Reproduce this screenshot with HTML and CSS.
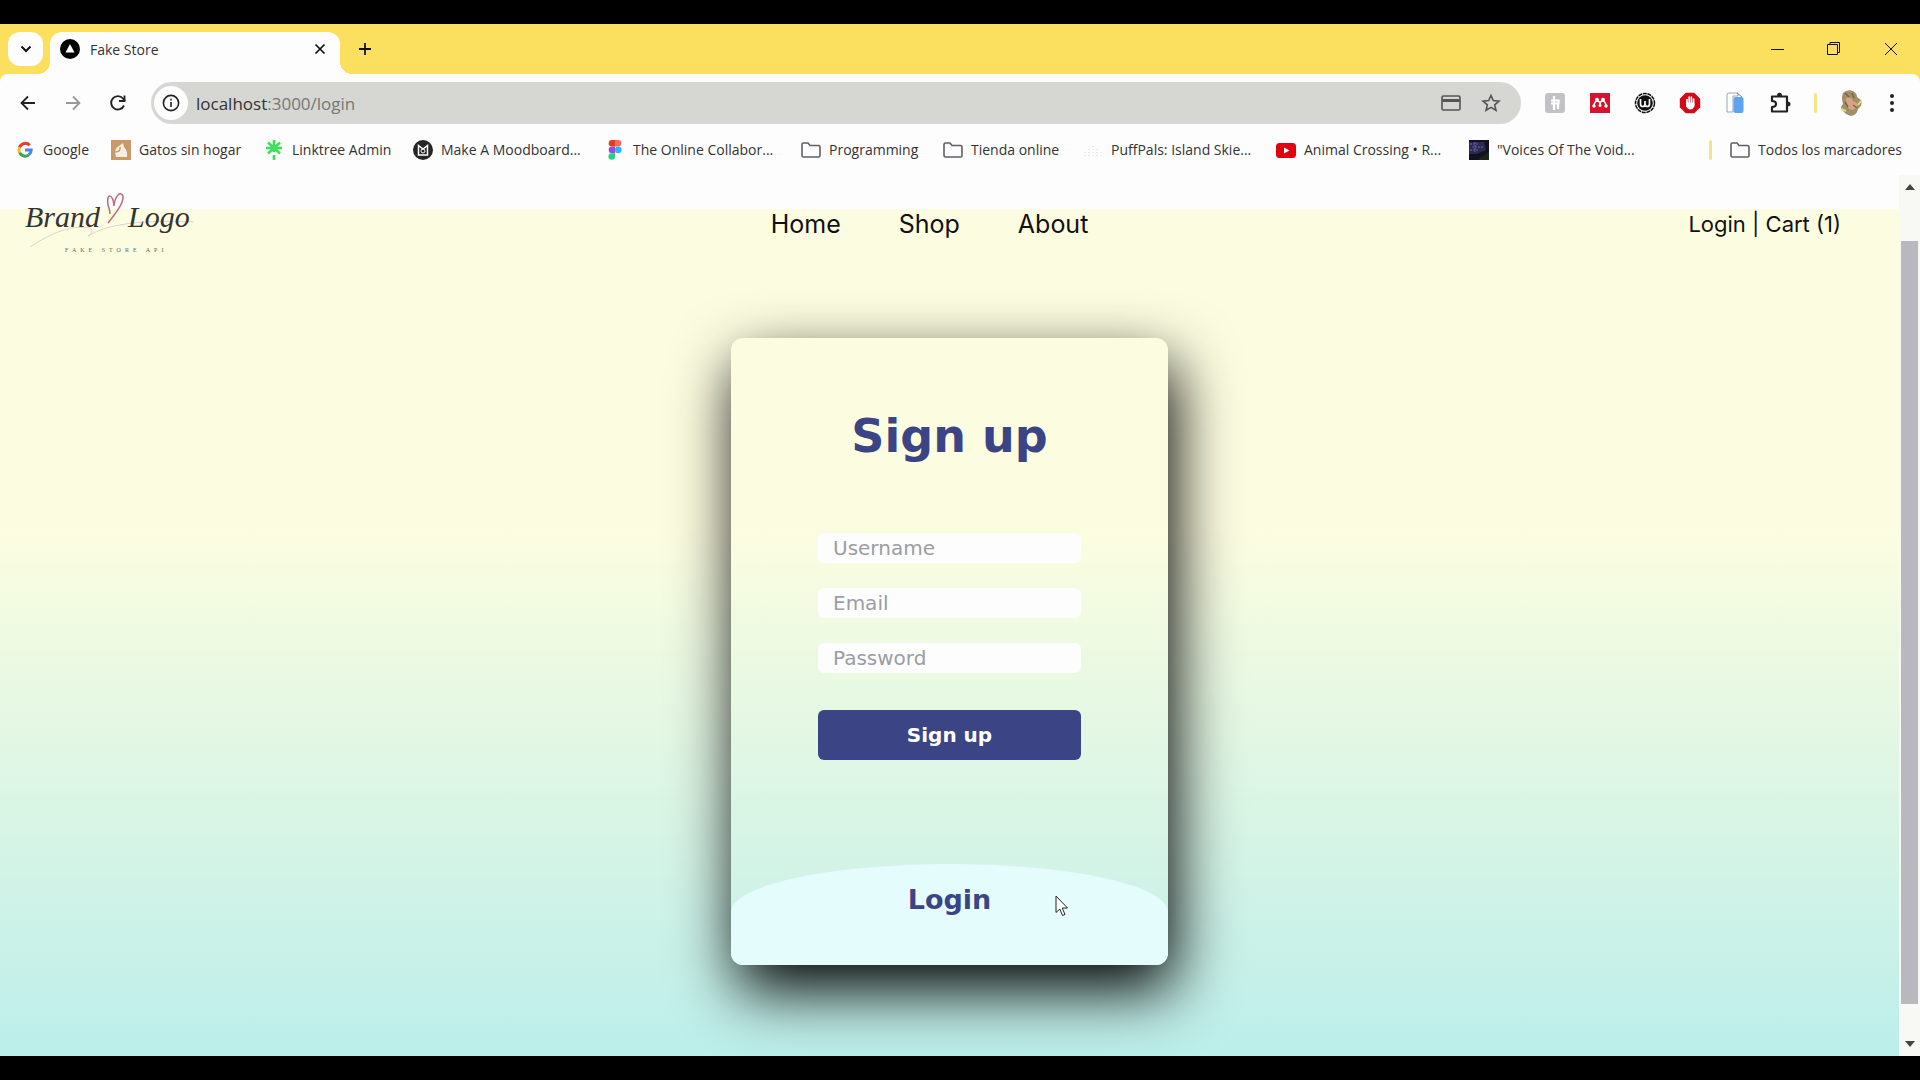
FILE: index.html
```html
<!DOCTYPE html>
<html lang="es">
<head>
<meta charset="utf-8">
<title>Fake Store</title>
<meta name="viewport" content="width=device-width, initial-scale=1">
<link rel="stylesheet" href="styles.css">
</head>
<body>
<div class="window">
  <div class="tabstrip">
    <button class="tab-search" type="button" aria-label="Buscar pestañas">
      <svg width="14" height="14" viewBox="0 0 14 14" fill="none" stroke="#111" stroke-width="2"><path d="M2.500 4.500 7 9 11.500 4.500"/></svg>
    </button>
    <div class="tab">
      <svg width="20" height="20" viewBox="0 0 20 20"><circle cx="10" cy="10" r="10" fill="#000"/><path d="M10 5 14.500 13.500H5.500Z" fill="#fff"/></svg>
      <span class="tab-title">Fake Store</span>
      <button class="plain" type="button" aria-label="Cerrar pestaña">
        <svg width="14" height="14" viewBox="0 0 14 14" stroke="#111" stroke-width="1.700"><path d="M2.500 2.500 11.500 11.500M11.500 2.500 2.500 11.500"/></svg>
      </button>
    </div>
    <button class="plain new-tab" type="button" aria-label="Nueva pestaña">
      <svg width="14" height="14" viewBox="0 0 14 14" stroke="#111" stroke-width="1.800"><path d="M7 1V13M1 7H13"/></svg>
    </button>
    <div class="window-controls">
      <button class="plain" type="button" aria-label="Minimizar"><svg width="14" height="14" viewBox="0 0 14 14" stroke="#111"><path d="M1 7.500H14"/></svg></button>
      <button class="plain" type="button" aria-label="Restaurar"><svg width="14" height="14" viewBox="0 0 14 14" fill="none" stroke="#111"><path d="M.5 2.500H10.500V12.500H.5ZM3 2.500V.5H12.500V10.500H10.500"/></svg></button>
      <button class="plain" type="button" aria-label="Cerrar"><svg width="14" height="14" viewBox="0 0 14 14" stroke="#111"><path d="M1 1 13 13M13 1 1 13"/></svg></button>
    </div>
  </div>

  <div class="toolbar">
    <div class="history">
      <button class="plain" type="button" aria-label="Atrás"><svg width="20" height="20" viewBox="0 0 20 20" fill="none" stroke="#222" stroke-width="1.800"><path d="M17 10H4M10 3.500 3.500 10 10 16.500"/></svg></button>
      <button class="plain" type="button" aria-label="Adelante"><svg width="20" height="20" viewBox="0 0 20 20" fill="none" stroke="#999" stroke-width="1.800"><path d="M3 10H16M10 3.500 16.500 10 10 16.500"/></svg></button>
      <button class="plain" type="button" aria-label="Recargar"><svg width="20" height="20" viewBox="0 0 20 20" fill="none" stroke="#222" stroke-width="1.900"><path d="M16 12.500A6.700 6.700 0 1 1 15 5.500L17 8"/><path d="M16.500 2.500V8H11"/></svg></button>
    </div>
    <div class="omnibox">
      <span class="site-info"><svg width="18" height="18" viewBox="0 0 18 18" fill="none" stroke="#222" stroke-width="1.600"><circle cx="9" cy="9" r="7.600"/><path d="M9 8V13M9 4.800V6.500"/></svg></span>
      <p class="url">localhost<span class="url-rest">:3000/login</span></p>
      <button class="plain" type="button" aria-label="Métodos de pago"><svg width="20" height="16" viewBox="0 0 20 16" fill="none" stroke="#555" stroke-width="1.600"><rect x="1" y="1" width="18" height="14" rx="1.500"/><path d="M1 5.500H19" stroke-width="3"/></svg></button>
      <button class="plain" type="button" aria-label="Añadir a marcadores"><svg width="20" height="20" viewBox="0 0 20 20" fill="none" stroke="#555" stroke-width="1.600"><path d="M10 2.500 12.300 7.600 18 8.200 13.700 11.900 15 17.300 10 14.400 5 17.300 6.300 11.900 2 8.200 7.700 7.600Z"/></svg></button>
    </div>
    <div class="extensions">
      <svg width="22" height="22" viewBox="0 0 22 22"><rect x="1" y="1" width="20" height="20" rx="3" fill="#c2c2c4"/><path d="M10 4V18M7 8.500H14.500V11.500H10M14 12V17M7 11.500H10" stroke="#fff" stroke-width="2.200" fill="none"/></svg>
      <svg width="22" height="22" viewBox="0 0 22 22"><path d="M1 1H21V21H1Z" fill="#d4142c"/><g fill="#fff"><circle cx="8" cy="7.800" r="2"/><circle cx="14" cy="7.800" r="2"/><circle cx="5" cy="14" r="1.700"/><circle cx="11" cy="13.500" r="1.500"/><circle cx="17" cy="14" r="1.700"/></g><path d="M5 13Q6 9 8.500 9Q11 9 11 13Q11 9 13.500 9Q16 9 17 13" fill="none" stroke="#fff" stroke-width="1.500"/></svg>
      <svg width="22" height="22" viewBox="0 0 22 22"><circle cx="11" cy="11" r="9.500" fill="#fff" stroke="#111" stroke-width="1.500" stroke-dasharray="4 .7"/><circle cx="11" cy="11" r="7.800" fill="#111"/><path d="M6.500 7V12Q6.500 14.500 8.700 14.500Q11 14.500 11 12V9V12Q11 14.500 13.300 14.500Q15.500 14.500 15.500 12V7" fill="none" stroke="#fff" stroke-width="1.700"/></svg>
      <svg width="22" height="22" viewBox="0 0 22 22"><path d="M6.700.8H15.300L21.200 6.700V15.300L15.300 21.200H6.700L.8 15.300V6.700Z" fill="#d00a16"/><path d="M8 14V7.500M10.200 12V5M12.400 12V5M14.600 13V7" stroke="#fff" stroke-width="1.700" stroke-linecap="round"/><path d="M7.200 10.500H15.400V14.500Q14 17.500 11.500 17.500Q8.500 17.500 7.200 14Z" fill="#fff"/></svg>
      <svg width="22" height="22" viewBox="0 0 22 22"><path d="M3 20V3Q3 1 5 1H14V4H9V20Z" fill="#fff" stroke="#9aa4b5"/><rect x="9.500" y="5" width="10" height="16" rx="2" fill="#5ea4ee"/><path d="M13 1 18 5" fill="none" stroke="#6b7c9a"/></svg>
      <svg width="22" height="22" viewBox="0 0 22 22"><path d="M3 4.500H18V19.500H3V15Q7 15 7 12Q7 9 3 9Z" fill="none" stroke="#222" stroke-width="2.200" stroke-linejoin="round"/><path d="M8 4Q8 .8 10.500 .8T13 4ZM18.500 9.500Q21.500 9.500 21.500 12T18.500 14.500Z" fill="#222"/></svg>
      <span class="rule"></span>
      <svg class="avatar" width="22" height="26" viewBox="0 0 22 26"><path d="M3 3Q7-1 13 1Q17 3 17 7L21 10Q23 15 18 19Q17 25 11 26Q6 25 3 21Q-1 18 3 14Q1 8 3 3Z" fill="#a08f68"/><path d="M6 8Q11 6 13 11L18 14Q17 19 12 20Q6 19 6 8Z" fill="#dca287"/><path d="M5 3 9 7M12 3 14 8M5 12 8 17M13 15 17 18" stroke="#6f6a48" stroke-width="1.500"/><path d="M18 15 21 11M1 19 6 21" stroke="#d8de7c" stroke-width="2"/></svg>
      <button class="plain" type="button" aria-label="Menú"><svg width="6" height="20" viewBox="0 0 6 20" fill="#222"><circle cx="3" cy="3" r="2"/><circle cx="3" cy="10" r="2"/><circle cx="3" cy="17" r="2"/></svg></button>
    </div>
  </div>

  <nav class="bookmarks" aria-label="Marcadores">
    <a href="#"><svg width="20" height="20" viewBox="0 0 20 20" fill="none" stroke-width="3"><path d="M14.800 5.300A6.200 6.200 0 0 0 4.500 7.500" stroke="#e5413a"/><path d="M4.500 7.500A6.200 6.200 0 0 0 4.600 12.800" stroke="#f6bd1d"/><path d="M4.600 12.800A6.200 6.200 0 0 0 13.800 14.900" stroke="#3aa757"/><path d="M13.800 14.900A6.200 6.200 0 0 0 16.200 10H10" stroke="#4285f4"/></svg>Google</a>
    <a href="#"><svg width="20" height="20" viewBox="0 0 20 20"><path d="M0 0H20V20H0Z" fill="#c79a68"/><path d="M5 17Q2 9 8 6L12 3 13 7Q17 11 16 17Z" fill="#f6eee4"/><path d="M4 12Q10 12 9 7" stroke="#c79a68" stroke-width="1.500" fill="none"/></svg>Gatos sin hogar</a>
    <a href="#"><svg width="20" height="20" viewBox="0 0 20 20" stroke="#3be05c" stroke-width="2.600"><path d="M10 0V12M10 15V20M2 8H18M4 2.500 16 13.500M16 2.500 4 13.500"/></svg>Linktree Admin</a>
    <a href="#"><svg width="20" height="20" viewBox="0 0 20 20"><circle cx="10" cy="10" r="10" fill="#262626"/><path d="M5.500 15V5.500L10 9 14.500 5.500V15Z" fill="none" stroke="#fff" stroke-width="1.500"/><circle cx="10" cy="11" r="2" fill="none" stroke="#fff"/></svg>Make A Moodboard...</a>
    <a href="#"><svg width="20" height="20" viewBox="0 0 20 20"><path d="M10 0V6.600H7A3.300 3.300 0 0 1 7 0Z" fill="#e2401c"/><path d="M10 0H13A3.300 3.300 0 0 1 13 6.600H10Z" fill="#f56a5c"/><path d="M10 6.600V13.200H7A3.300 3.300 0 0 1 7 6.600Z" fill="#954ce8"/><circle cx="13.300" cy="9.900" r="3.300" fill="#28b9f4"/><path d="M10 13.200V16.500A3.300 3.300 0 1 1 7 13.200Z" fill="#24d47a"/></svg>The Online Collabor...</a>
    <a href="#"><svg width="20" height="20" viewBox="0 0 20 20" fill="none" stroke="#5f5f66" stroke-width="1.600"><path d="M1 4.500Q1 3 2.500 3H7L9 5.500H17.500Q19 5.500 19 7V15.500Q19 17 17.500 17H2.500Q1 17 1 15.500Z"/></svg>Programming</a>
    <a href="#"><svg width="20" height="20" viewBox="0 0 20 20" fill="none" stroke="#5f5f66" stroke-width="1.600"><path d="M1 4.500Q1 3 2.500 3H7L9 5.500H17.500Q19 5.500 19 7V15.500Q19 17 17.500 17H2.500Q1 17 1 15.500Z"/></svg>Tienda online</a>
    <a href="#"><svg width="20" height="20" viewBox="0 0 20 20" stroke="#e4e4e8" stroke-width="1.500" stroke-dasharray="1 2"><path d="M2 16V10M6 16V7M10 16V5M14 16V8M18 16V10"/></svg>PuffPals: Island Skie...</a>
    <a href="#"><svg width="20" height="20" viewBox="0 0 20 20"><rect y="3" width="20" height="15" rx="3.500" fill="#e00010"/><path d="M8 7.500 13.500 10.500 8 13.500Z" fill="#fff"/></svg>Animal Crossing • R...</a>
    <a href="#"><svg width="20" height="20" viewBox="0 0 20 20"><path d="M0 0H20V20H0Z" fill="#11121f"/><path d="M0 2H15L17 10 8 14H0Z" fill="#2c2a55"/><path d="M1 4H9M3 7H14M1 10H9M6 2V12" stroke="#6c68a0" stroke-dasharray="2 1"/><path d="M8 20 20 12V20Z" fill="#1b2418"/></svg>"Voices Of The Void...</a>
    <span class="rule"></span>
    <a href="#"><svg width="20" height="20" viewBox="0 0 20 20" fill="none" stroke="#5f5f66" stroke-width="1.600"><path d="M1 4.500Q1 3 2.500 3H7L9 5.500H17.500Q19 5.500 19 7V15.500Q19 17 17.500 17H2.500Q1 17 1 15.500Z"/></svg>Todos los marcadores</a>
  </nav>

  <div class="viewport">
    <div class="page">
      <header class="site-header">
        <a class="brand" href="#" aria-label="Brand Logo">
          <svg width="184" height="88" viewBox="0 0 184 88">
            <g fill="none"><path d="M12 67Q48 43 72 48Q77 51 70 56Q98 38 176 42" stroke="#dcc6cb" opacity=".8"/><path d="M90 43C96 35 106 24 105 16C103 11 97 15 96 26C95 14 88 12 90 25Q92 31 92 34" stroke="#b96a80" stroke-width="1.500"/></g>
            <text class="script" x="7" y="47">Brand</text>
            <text class="script" x="110" y="47">Logo</text>
            <text class="tagline" x="47" y="72">FAKE STORE API</text>
          </svg>
        </a>
        <nav class="site-nav" aria-label="Principal">
          <a href="#">Home</a><a href="#">Shop</a><a href="#">About</a>
        </nav>
        <div class="account"><a href="#">Login</a> | <a href="#">Cart (1)</a></div>
      </header>
      <main class="content">
        <div class="card">
          <form class="signup">
            <h1>Sign up</h1>
            <input type="text" placeholder="Username" aria-label="Username">
            <input type="email" placeholder="Email" aria-label="Email">
            <input type="password" placeholder="Password" aria-label="Password">
            <button class="submit" type="button">Sign up</button>
          </form>
          <button class="login-panel" type="button">Login</button>
          <svg class="cursor" width="14" height="22" viewBox="0 0 14 22"><path d="M1 1V17.500L4.800 14 7.500 20.500 10 19.500 7.200 13H12.500Z" fill="#fff" stroke="#222"/></svg>
        </div>
      </main>
    </div>
    <div class="scrollbar" aria-hidden="true">
      <svg width="10" height="6" viewBox="0 0 10 6"><path d="M5 0 10 6H0Z" fill="#444"/></svg>
      <div class="thumb"></div>
      <svg width="10" height="6" viewBox="0 0 10 6"><path d="M0 0H10L5 6Z" fill="#444"/></svg>
    </div>
  </div>
</div>
</body>
</html>
```
FILE: styles.css
```css
* { box-sizing: border-box; }

body {
  margin: 0;
  background: #000;
  font-family: "Open Sans", "Noto Sans", sans-serif;
  color: #333;
}

a { color: inherit; text-decoration: none; }
svg { display: block; flex: none; }

.plain {
  display: block;
  padding: 0;
  border: 0;
  background: none;
}

.window {
  display: flex;
  flex-direction: column;
  min-height: 100vh;
  padding: 24px 0;
}

/* Tab strip */
.tabstrip {
  display: flex;
  align-items: center;
  height: 50px;
  padding: 0 22px 0 8px;
  background: #fbdf5e;
}

.tab-search {
  display: grid;
  place-items: center;
  width: 35px;
  height: 34px;
  padding: 0;
  border: 0;
  border-radius: 12px;
  background: #fdfdfd;
}

.tab {
  position: relative;
  display: flex;
  align-items: center;
  align-self: flex-end;
  gap: 10px;
  width: 290px;
  height: 42px;
  margin-left: 7px;
  padding: 0 13px 8px 10px;
  border-radius: 12px 12px 0 0;
  background: #fdfdfd;
  font-size: 14px;
}

.tab::before,
.tab::after {
  content: "";
  position: absolute;
  bottom: 0;
  width: 12px;
  height: 12px;
}

.tab::before { right: 100%; background: radial-gradient(circle at 0 0, transparent 12px, #fdfdfd 12px); }
.tab::after { left: 100%; background: radial-gradient(circle at 100% 0, transparent 12px, #fdfdfd 12px); }

.tab-title { flex: 1; }
.new-tab { margin-left: 18px; }

.window-controls {
  display: flex;
  gap: 43px;
  margin-left: auto;
}

/* Toolbar */
.toolbar {
  display: flex;
  align-items: center;
  gap: 23px;
  height: 58px;
  padding: 0 25px 0 18px;
  border-radius: 8px 8px 0 0;
  background: #fdfdfd;
  box-shadow: 0 -8px 0 8px #fbdf5e;
  clip-path: inset(0);
}

.history { display: flex; gap: 25px; }

.omnibox {
  display: flex;
  flex: 1;
  align-items: center;
  gap: 20px;
  height: 42px;
  padding: 0 20px 0 3px;
  border-radius: 21px;
  background: #d6d6d3;
}

.site-info {
  display: grid;
  place-items: center;
  width: 34px;
  height: 34px;
  border-radius: 50%;
  background: #fdfdfd;
}

.url {
  flex: 1;
  margin: 0 0 0 -12px;
  font-size: 17px;
}

.url-rest { color: #777; }

.extensions { display: flex; align-items: center; gap: 23px; }
.avatar { margin-right: 4px; }

.rule {
  width: 3px;
  height: 20px;
  border-radius: 2px;
  background: #f5e487;
}

/* Bookmarks bar */
.bookmarks {
  display: grid;
  grid-template-columns: 96px 153px 149px 192px 196px 142px 140px 193px 193px 1fr 21px auto;
  align-items: center;
  height: 43px;
  padding: 0 18px 8px 15px;
  background: #fdfdfd;
  font-size: 14px;
}

.bookmarks a {
  display: flex;
  align-items: center;
  gap: 8px;
  white-space: nowrap;
}

/* Web page area */
.viewport {
  display: flex;
  flex: 1;
  background: linear-gradient(#fcfde0 40%, #bceeea);
}

.page {
  display: flex;
  flex: 1;
  flex-direction: column;
  background: linear-gradient(#fdfdfd 34px, transparent 34px);
}

.site-header {
  display: grid;
  grid-template-columns: 1fr auto 1fr;
  align-items: center;
  height: 98px;
  padding: 0 58px 0 18px;
  color: #111;
  font: 25px/30px Inter, sans-serif;
}

.site-nav { display: flex; gap: 58px; }

.account {
  justify-self: end;
  font-size: 22px;
}

.script {
  font: italic 30px "Liberation Serif", serif;
  fill: #333;
}

.tagline {
  font: 6px "Liberation Serif", serif;
  letter-spacing: 4px;
  fill: #666;
}

.content {
  display: flex;
  justify-content: center;
  padding: 65px 0 91px;
  font-family: "DejaVu Sans", sans-serif;
}

.card {
  position: relative;
  display: flex;
  flex-direction: column;
  width: 437px;
  border-radius: 12px;
  overflow: hidden;
  box-shadow: 6px 25px 63px #000;
}

.signup {
  display: flex;
  flex-direction: column;
  align-items: center;
  gap: 25px;
  padding: 70px 87px 104px;
}

.signup h1 {
  margin: 0 0 44px;
  color: #3b4484;
  font-size: 46px;
  line-height: 56px;
}

.signup input {
  width: 100%;
  height: 30px;
  padding: 0 15px;
  border: 0;
  border-radius: 6px;
  background: #fdfdfd;
  color: #333;
  font: 20px "DejaVu Sans", sans-serif;
}

.signup input::placeholder { color: #9a9da3; opacity: 1; }

.submit {
  width: 100%;
  height: 50px;
  margin-top: 12px;
  border: 0;
  border-radius: 6px;
  background: #3b4484;
  color: #fff;
  font: bold 20px "DejaVu Sans", sans-serif;
}

.login-panel {
  height: 101px;
  padding: 0 0 30px;
  border: 0;
  border-radius: 50% 50% 0 0 / 48px 48px 0 0;
  background: #e5fcfd;
  color: #3b4484;
  font: bold 27px "DejaVu Sans", sans-serif;
}

.cursor {
  position: absolute;
  right: 99px;
  bottom: 48px;
}

.scrollbar {
  display: flex;
  flex-direction: column;
  align-items: center;
  width: 21px;
  padding: 9px 0;
  background: #f8f8f4;
}

.thumb {
  flex: 1;
  width: 17px;
  margin: 51px 0 37px;
  background: #b9b9bd;
}
```
